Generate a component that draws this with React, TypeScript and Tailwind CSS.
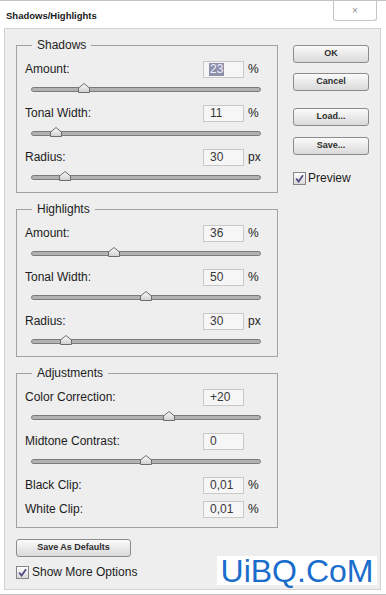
import React from 'react';

const font = { fontFamily: '"Liberation Sans", Arial, sans-serif' };

function Thumb({ pos }: { pos: number }) {
  return (
    <svg
      width="12"
      height="10"
      viewBox="0 0 12 10"
      className="absolute top-[5px]"
      style={{ left: `calc(${pos}% - 6px)` }}
    >
      <defs>
        <linearGradient id="thumbFill" x1="0" y1="0" x2="0" y2="1">
          <stop offset="0" stopColor="#fbfbfb" />
          <stop offset="1" stopColor="#cfcfcf" />
        </linearGradient>
      </defs>
      <path d="M0.5 9.5 V5 L6 0.5 L11.5 5 V9.5 Z" fill="url(#thumbFill)" stroke="#6c6c6c" strokeWidth="1" />
    </svg>
  );
}

function Slider({ pos }: { pos: number }) {
  return (
    <div className="relative ml-[6px] h-[22px] w-[230px] pt-[9px]">
      <div className="h-[5px] rounded-full border border-[#7a7a7a] bg-[#b2b2b2]" />
      <Thumb pos={pos} />
    </div>
  );
}

function Field({
  label,
  value,
  unit = '',
  selected = false,
}: {
  label: string;
  value: string;
  unit?: string;
  selected?: boolean;
}) {
  return (
    <div className="flex h-[18px] items-center text-[12px] text-[#1c1c1c]">
      <span className="flex-1">{label}</span>
      <div className="flex h-[17px] w-[41px] items-center border border-[#c8c8c8] bg-[#f6f6f6] pl-[5px] text-[#383838]">
        {selected ? (
          <span className="bg-[#8e90a9] px-[1px] leading-[13px] text-[#eef]">{value}</span>
        ) : (
          <span className="pl-[1px]">{value}</span>
        )}
      </div>
      <span className="w-[33px] pl-[4px]">{unit}</span>
    </div>
  );
}

function Group({ title, children, className = '' }: { title: string; children: React.ReactNode; className?: string }) {
  return (
    <fieldset className={`w-[262px] border border-[#a2a2a2] ${className}`}>
      <legend className="ml-[15px] px-[5px] text-[12px] leading-[16px] text-[#1c1c1c]">{title}</legend>
      {children}
    </fieldset>
  );
}

function Button({ children, className = '' }: { children: React.ReactNode; className?: string }) {
  return (
    <div
      className={`flex h-[18px] items-center justify-center rounded-[3px] border border-[#8c8c8c] bg-gradient-to-b from-[#fbfbfb] to-[#d9d9d9] text-[9px] font-bold text-[#2e2e2e] ${className}`}
    >
      {children}
    </div>
  );
}

function Check() {
  return (
    <span className="flex h-[13px] w-[13px] items-center justify-center border border-[#858585] bg-gradient-to-b from-[#ffffff] to-[#d8d8d8]">
      <svg width="9" height="9" viewBox="0 0 9 9">
        <path d="M1.2 4.6 L3.6 7.6 L8 1.2" fill="none" stroke="#54467f" strokeWidth="1.7" />
      </svg>
    </span>
  );
}

export default function App() {
  return (
    <div className="h-[595px] w-[386px] border-y border-[#c2c2c2] bg-white" style={font}>
      <div className="flex h-[27px] items-start justify-between">
        <span className="mt-[8px] pl-[6px] text-[9.5px] font-bold text-[#1a1a1a]">Shadows/Highlights</span>
        <div className="mr-[9px] flex h-[20px] w-[44px] items-center justify-center rounded-b-[3px] border border-t-0 border-[#c6c6c6] text-[10px] text-[#8a8a8a]">
          ×
        </div>
      </div>

      <div className="relative ml-[4px] h-[562px] w-[377px] border border-[#d2d2d2] bg-[#eeeeee] pl-[11px] pt-[8px]">
        <div className="flex items-start">
          <div className="flex w-[262px] flex-col">
            <Group title="Shadows">
              <div className="flex flex-col gap-[4px] pb-[4px] pl-[8px] pt-[7px]">
                <div>
                  <Field label="Amount:" value="23" unit="%" selected />
                  <Slider pos={23} />
                </div>
                <div>
                  <Field label="Tonal Width:" value="11" unit="%" />
                  <Slider pos={11} />
                </div>
                <div>
                  <Field label="Radius:" value="30" unit="px" />
                  <Slider pos={14.8} />
                </div>
              </div>
            </Group>

            <Group title="Highlights" className="mt-[8px]">
              <div className="flex flex-col gap-[4px] pb-[4px] pl-[8px] pt-[7px]">
                <div>
                  <Field label="Amount:" value="36" unit="%" />
                  <Slider pos={36} />
                </div>
                <div>
                  <Field label="Tonal Width:" value="50" unit="%" />
                  <Slider pos={50} />
                </div>
                <div>
                  <Field label="Radius:" value="30" unit="px" />
                  <Slider pos={15.2} />
                </div>
              </div>
            </Group>

            <Group title="Adjustments" className="mt-[8px]">
              <div className="flex flex-col pb-[9px] pl-[8px] pt-[7px]">
                <div>
                  <Field label="Color Correction:" value="+20" />
                  <Slider pos={60} />
                </div>
                <div className="mt-[4px]">
                  <Field label="Midtone Contrast:" value="0" />
                  <Slider pos={50} />
                </div>
                <div className="mt-[4px]">
                  <Field label="Black Clip:" value="0,01" unit="%" />
                </div>
                <div className="mt-[6px]">
                  <Field label="White Clip:" value="0,01" unit="%" />
                </div>
              </div>
            </Group>

            <Button className="mt-[11px] w-[115px]">Save As Defaults</Button>
            <div className="mt-[8px] flex h-[14px] items-center gap-[3px] text-[12px] text-[#1c1c1c]">
              <Check />
              <span>Show More Options</span>
            </div>
          </div>

          <div className="ml-[15px] mt-[8px] flex w-[76px] flex-col">
            <Button>OK</Button>
            <Button className="mt-[10px]">Cancel</Button>
            <Button className="mt-[17px]">Load...</Button>
            <Button className="mt-[11px]">Save...</Button>
            <div className="mt-[16px] flex h-[14px] items-center gap-[2px] text-[12px] text-[#1c1c1c]">
              <Check />
              <span>Preview</span>
            </div>
          </div>
        </div>

        <div className="absolute bottom-[4px] right-[3px] flex h-[29px] w-[160px] items-center justify-center bg-white text-[32px] leading-none text-[#1b6dcb]">
          UiBQ.CoM
        </div>
      </div>
    </div>
  );
}
